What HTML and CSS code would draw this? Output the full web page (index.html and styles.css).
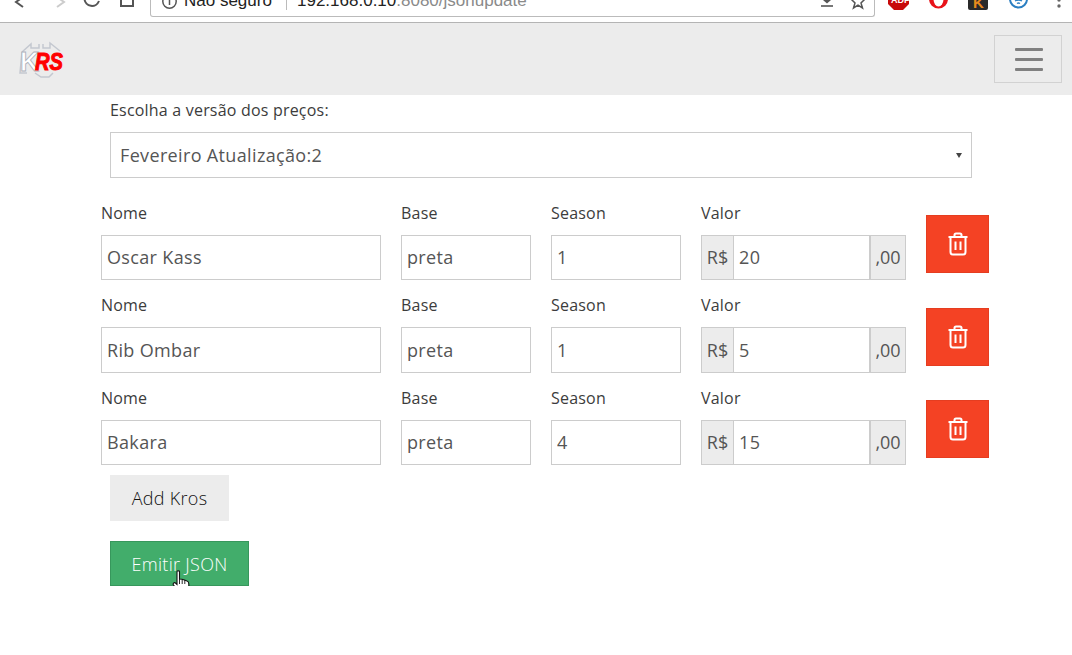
FILE: index.html
```html
<!DOCTYPE html>
<html lang="pt-BR">
<head>
    <meta charset="utf-8">
    <title>JSON Update</title>
    <link rel="stylesheet" href="styles.css">
</head>
<body>
    <!-- browser toolbar, only the bottom of it is on screen -->
    <div class="chrome">
        <svg class="tool" width="150" height="22" viewBox="0 0 150 22">
            <path d="M23 -3 L16 2 L23 7" fill="none" stroke="#555" stroke-width="2"/>
            <path d="M57 -3 L64 2 L57 7" fill="none" stroke="#ccc" stroke-width="2"/>
            <path d="M84.500 -1 A7.500 7.500 0 0 0 99 1" fill="none" stroke="#555" stroke-width="2"/>
            <path d="M121 -3 V6 H133 V-3" fill="none" stroke="#555" stroke-width="2"/>
        </svg>
        <div class="omnibox">
            <svg class="info" width="17" height="16" viewBox="0 0 17 16">
                <circle cx="8.500" cy="1.500" r="6.700" fill="none" stroke="#555" stroke-width="1.500"/>
                <path d="M8.500 0 V5" stroke="#555" stroke-width="1.500"/>
            </svg>
            <span class="secure">Não seguro</span>
            <span class="sep"></span>
            <span class="url">192.168.0.10<span class="url-rest">:8080/jsonupdate</span></span>
            <svg class="box-icon" width="60" height="16" viewBox="0 0 60 16">
                <path d="M17 0 H25 L21 3.500 Z" fill="#555"/>
                <path d="M15 6 H27" stroke="#555" stroke-width="1.600"/>
                <path d="M52 -6 L54 -1 L59 -1 L55 3 L56.500 8 L52 5.200 L47.500 8 L49 3 L45 -1 L50 -1 Z" fill="none" stroke="#555" stroke-width="1.500"/>
            </svg>
        </div>
        <svg class="tool" width="197" height="22" viewBox="0 0 197 22">
            <path d="M13 -3 H34 V4 L28 10 H19 L13 4 Z" fill="#c80a0a"/>
            <text x="16" y="3" class="abp">ADP</text>
            <circle cx="63.500" cy="-1" r="9.500" fill="#e8141a"/>
            <ellipse cx="63.500" cy="-1" rx="5" ry="7.500" fill="#fff"/>
            <rect x="93" y="-6" width="20" height="16" rx="2" fill="#2a2a2a"/>
            <text x="98" y="8" class="ext-k">K</text>
            <circle cx="143.500" cy="-1" r="8.500" fill="none" stroke="#2b7fc2" stroke-width="2"/>
            <path d="M140 1 Q143.500 -1 147 1 M142 3.500 Q143.500 2.500 145 3.500" fill="none" stroke="#2b7fc2" stroke-width="1.400"/>
            <circle cx="184" cy="0" r="1.700" fill="#666"/>
            <circle cx="184" cy="6" r="1.700" fill="#666"/>
        </svg>
    </div>

    <nav class="navbar">
        <svg class="logo" width="46" height="38" viewBox="0 0 46 38">
            <path d="M3 12 L12 4 L12 8 H20 V4 M24 4 V8 H31 V3 L41 11 M3 12 L1 33 L8 33 M16 33 L22 37 H30 L34 33" fill="none" stroke="#c4c8d0" stroke-width="1.500"/>
            <text x="1" y="31" class="logo-k" textLength="19" lengthAdjust="spacingAndGlyphs">K</text>
            <text x="16" y="30" class="logo-rs" textLength="28" lengthAdjust="spacingAndGlyphs">RS</text>
        </svg>
        <button class="toggler" type="button" aria-label="Menu">
            <span></span><span></span><span></span>
        </button>
    </nav>

    <main class="page">
        <div class="version">
            <label class="field-label" for="versao">Escolha a versão dos preços:</label>
            <div class="select-wrap">
                <select id="versao" class="version-select">
                    <option>Fevereiro Atualização:2</option>
                </select>
            </div>
        </div>

        <div class="kros-list">
            <div class="kros-row">
                <div class="field">
                    <label class="field-label">Nome</label>
                    <input class="text-input" value="Oscar Kass">
                </div>
                <div class="field">
                    <label class="field-label">Base</label>
                    <input class="text-input" value="preta">
                </div>
                <div class="field">
                    <label class="field-label">Season</label>
                    <input class="text-input" value="1">
                </div>
                <div class="field">
                    <label class="field-label">Valor</label>
                    <div class="input-group">
                        <span class="addon addon-left">R$</span>
                        <input class="text-input" value="20">
                        <span class="addon addon-right">,00</span>
                    </div>
                </div>
                <button class="btn-delete" type="button" aria-label="Excluir">
                    <svg width="22" height="24" viewBox="0 0 22 24"><use href="#trash"/></svg>
                </button>
            </div>

            <div class="kros-row">
                <div class="field">
                    <label class="field-label">Nome</label>
                    <input class="text-input" value="Rib Ombar">
                </div>
                <div class="field">
                    <label class="field-label">Base</label>
                    <input class="text-input" value="preta">
                </div>
                <div class="field">
                    <label class="field-label">Season</label>
                    <input class="text-input" value="1">
                </div>
                <div class="field">
                    <label class="field-label">Valor</label>
                    <div class="input-group">
                        <span class="addon addon-left">R$</span>
                        <input class="text-input" value="5">
                        <span class="addon addon-right">,00</span>
                    </div>
                </div>
                <button class="btn-delete" type="button" aria-label="Excluir">
                    <svg width="22" height="24" viewBox="0 0 22 24"><use href="#trash"/></svg>
                </button>
            </div>

            <div class="kros-row">
                <div class="field">
                    <label class="field-label">Nome</label>
                    <input class="text-input" value="Bakara">
                </div>
                <div class="field">
                    <label class="field-label">Base</label>
                    <input class="text-input" value="preta">
                </div>
                <div class="field">
                    <label class="field-label">Season</label>
                    <input class="text-input" value="4">
                </div>
                <div class="field">
                    <label class="field-label">Valor</label>
                    <div class="input-group">
                        <span class="addon addon-left">R$</span>
                        <input class="text-input" value="15">
                        <span class="addon addon-right">,00</span>
                    </div>
                </div>
                <button class="btn-delete" type="button" aria-label="Excluir">
                    <svg width="22" height="24" viewBox="0 0 22 24"><use href="#trash"/></svg>
                </button>
            </div>
        </div>

        <div class="actions">
            <button class="btn btn-add" type="button">Add Kros</button>
            <button class="btn btn-emit" type="button">Emitir JSON</button>
            <!-- mouse pointer caught in the screenshot -->
            <svg class="pointer" width="18" height="24" viewBox="0 0 18 24">
                <path d="M5 1.500 C5 .5 7.500 .5 7.500 1.500 V9 L10 9.200 L12.500 10 L15 11 C16.500 11.500 16.800 12.500 16.800 14 V18 L15 22.500 H7 L1.500 15 C.5 13.500 2 12 3.500 13 L5 14.500 Z" fill="#fff" stroke="#111" stroke-width="1.100"/>
                <path d="M7.500 9 V14 M10.200 9.500 V14 M12.800 10 V14" stroke="#111" stroke-width=".9" fill="none"/>
            </svg>
        </div>
    </main>

    <svg class="defs" width="0" height="0">
        <symbol id="trash" viewBox="0 0 22 24">
            <path d="M1.500 5 H20.500 M7.500 5 V3 Q7.500 1.500 9 1.500 H13 Q14.500 1.500 14.500 3 V5 M3.500 5 V20 Q3.500 22.500 6 22.500 H16 Q18.500 22.500 18.500 20 V5 M8.500 9.500 V18 M13.500 9.500 V18" fill="none" stroke="#fff" stroke-width="2"/>
        </symbol>
    </svg>
</body>
</html>
```

FILE: styles.css
```css
body {
    margin: 0;
    font-family: "Open Sans", sans-serif;
    font-size: 16px;
    color: #3c3c3c;
    background: #fff;
}

/* browser toolbar */
.chrome {
    display: flex;
    align-items: flex-start;
    height: 22px;
    overflow: hidden;
    background: #fff;
    border-bottom: 1px solid #b4b4b4;
}
.tool {
    flex: none;
    display: block;
}
.omnibox {
    display: flex;
    align-items: flex-start;
    flex: none;
    width: 725px;
    height: 17px;
    box-sizing: border-box;
    padding-left: 10px;
    border: 1px solid #bbb;
    border-top: 0;
    border-radius: 0 0 3px 3px;
    font-family: "Liberation Sans", sans-serif;
    font-size: 17px;
    color: #222;
    white-space: nowrap;
}
.omnibox .info {
    flex: none;
    margin-right: 6px;
}
.secure {
    flex: none;
    width: 102px;
    margin-top: -7px;
    line-height: 16px;
}
.sep {
    flex: none;
    width: 1px;
    height: 10px;
    margin-right: 10px;
    background: #bbb;
}
.url {
    flex: 1;
    margin-top: -7px;
    line-height: 16px;
}
.url-rest {
    color: #8a8a8a;
}
.box-icon {
    flex: none;
    margin-right: 8px;
}
.abp {
    font: bold 9px "Liberation Sans", sans-serif;
    fill: #fff;
}
.ext-k {
    font: bold 15px "Liberation Sans", sans-serif;
    fill: #e88a1c;
}

/* navbar */
.navbar {
    display: flex;
    align-items: center;
    justify-content: space-between;
    height: 72px;
    padding: 0 10px 0 19px;
    background: #ececec;
}
.logo {
    display: block;
}
.logo-k {
    font: bold 27px "Liberation Sans", sans-serif;
    fill: #fff;
    stroke: #aeb2bc;
    stroke-width: .9;
}
.logo-rs {
    font: italic bold 24px "Liberation Sans", sans-serif;
    fill: #f00;
    stroke: #f00;
    stroke-width: 1;
}
.toggler {
    display: flex;
    flex-direction: column;
    justify-content: center;
    gap: 7px;
    width: 68px;
    height: 48px;
    padding: 0 20px;
    background: transparent;
    border: 1px solid #d2d2d2;
}
.toggler span {
    display: block;
    width: 28px;
    height: 3px;
    background: #808080;
    border-radius: 1px;
}

/* form */
.page {
    padding-left: 101px;
}
.version {
    padding: 0 100px 0 9px;
}
.field-label {
    display: block;
    height: 30px;
    line-height: 30px;
    letter-spacing: .2px;
    color: #3c3c3c;
}
.version .field-label {
    height: 37px;
}
.select-wrap {
    position: relative;
    width: 862px;
}
/* small arrow of the select */
.select-wrap::after {
    content: "";
    position: absolute;
    right: 10px;
    top: 21px;
    border: 3.500px solid transparent;
    border-top: 5px solid #444;
    border-bottom: 0;
}
.version-select {
    display: block;
    appearance: none;
    width: 100%;
    height: 46px;
    padding: 0 9px;
    font: 18px "Open Sans", sans-serif;
    letter-spacing: .35px;
    color: #555;
    background: #fff;
    border: 1px solid #ccc;
    border-radius: 0;
}
.kros-list {
    padding-top: 19.900px;
}
.kros-row {
    display: grid;
    grid-template-columns: 280px 130px 130px 205px 63px;
    column-gap: 20px;
    height: 92.500px;
}
.field-label + .text-input,
.field-label + .input-group {
    margin-top: 7px;
}
.text-input {
    display: block;
    box-sizing: border-box;
    width: 100%;
    min-width: 0;
    height: 45.500px;
    padding: 0 5px 1px;
    font: 18px "Open Sans", sans-serif;
    letter-spacing: .35px;
    color: #555;
    background: #fff;
    border: 1px solid #ccc;
    border-radius: 0;
}
.input-group {
    display: flex;
    height: 45.500px;
}
.input-group .text-input {
    flex: 1;
    width: auto;
    border-left: 0;
}
.addon {
    display: flex;
    align-items: center;
    justify-content: center;
    box-sizing: border-box;
    height: 45.500px;
    padding-bottom: 1px;
    font-size: 18px;
    color: #555;
    background: #ececec;
    border: 1px solid #ccc;
}
.addon-left {
    width: 33px;
}
.addon-right {
    width: 36px;
}
.btn-delete {
    display: flex;
    align-items: center;
    justify-content: center;
    width: 63px;
    height: 58px;
    margin-top: 17.500px;
    padding: 0;
    background: #f44224;
    border: 1px solid #e53d20;
}

/* bottom buttons */
.actions {
    position: relative;
    display: flex;
    flex-direction: column;
    align-items: flex-start;
    gap: 20px;
    padding-left: 9px;
}
.btn {
    height: 46px;
    font: 300 18px "Open Sans", sans-serif;
    letter-spacing: .3px;
    border: 0;
    border-radius: 0;
}
.btn-add {
    width: 119px;
    color: #111;
    background: #ececec;
}
.btn-emit {
    width: 139px;
    height: 45px;
    color: #fff;
    background: #42ad6b;
    border: 1px solid #37975c;
}
.pointer {
    position: absolute;
    left: 71px;
    top: 95px;
}
.defs {
    position: absolute;
}
```
